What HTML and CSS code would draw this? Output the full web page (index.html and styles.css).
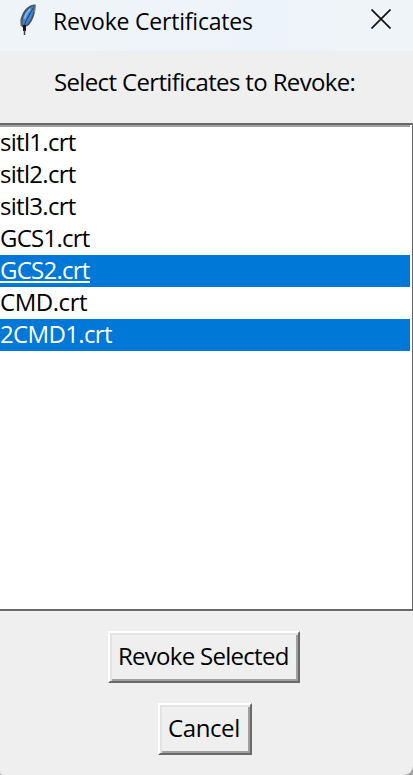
FILE: index.html
```html
<!DOCTYPE html>
<html lang="en">
<head>
<meta charset="utf-8">
<title>Revoke Certificates</title>
<link rel="stylesheet" href="styles.css">
</head>
<body>
<div class="window">
  <header class="titlebar">
    <svg class="feather" viewBox="0 0 20 34" width="20" height="34" aria-hidden="true">
      <path d="M17 1.500C11.500 1.500 6.500 6 4 12C2 16 2 20 3.500 23.500L5.500 25L11 22C14.500 18 17.500 11 17.800 2Z" fill="#45525f"/>
      <path d="M15.500 3C10.500 4.500 6.500 9.500 5 15L4.500 21.500L8 22C12 19 14.500 13 15.500 8Z" fill="#4384cf"/>
      <path d="M12.500 6C9.500 8.500 7.500 12 6.500 16" fill="none" stroke="#7ab2ec" stroke-width="2"/>
      <path d="M15.500 4.500C12.500 10 9 15 6 23" fill="none" stroke="#22405f" stroke-width="1"/>
      <path d="M6.500 22V28" fill="none" stroke="#181818" stroke-width="3"/>
      <path d="M6.500 27V32" fill="none" stroke="#444" stroke-width="1.500"/>
      <path d="M17.500 1.500L16.500 9M2.800 16V23" fill="none" stroke="#999" stroke-width="1"/>
    </svg>
    <h1 class="title">Revoke Certificates</h1>
    <svg class="close" viewBox="0 0 20 20" width="20" height="20" role="img" aria-label="Close">
      <path d="M.5 .5L19.500 19.500M19.500 .5L.5 19.500" fill="none" stroke="#111" stroke-width="1.700"/>
    </svg>
  </header>
  <p class="prompt">Select Certificates to Revoke:</p>
  <div class="listbox">
    <ul class="list">
      <li class="item sitl"><span>sitl1.crt</span></li>
      <li class="item sitl"><span>sitl2.crt</span></li>
      <li class="item sitl"><span>sitl3.crt</span></li>
      <li class="item gcs"><span>GCS1.crt</span></li>
      <li class="item gcs selected active"><span>GCS2.crt</span></li>
      <li class="item cmd"><span>CMD.crt</span></li>
      <li class="item cmd-one selected"><span>2CMD1.crt</span></li>
    </ul>
  </div>
  <div class="actions">
    <button class="button revoke"><span>Revoke Selected</span></button>
    <button class="button cancel"><span>Cancel</span></button>
  </div>
</div>
</body>
</html>
```
FILE: styles.css
```css
* { box-sizing: border-box; }
body {
  margin: 0;
  background: #a5a5a5;
  font-family: "Open Sans", "Noto Sans", sans-serif;
  font-size: 24px;
  line-height: 32px;
  color: #000;
}
.window {
  display: flex;
  flex-direction: column;
  height: 775px;
  overflow: hidden;
  background: #efefef;
  border-radius: 0 0 9px 3px;
}
.titlebar {
  display: flex;
  align-items: flex-start;
  height: 51px;
  padding: 3px 22px 0 18px;
  background: linear-gradient(100deg, #eff4f8 20%, #edf3fb 65%, #eff4f8 85%);
}
.feather { flex: none; }
.title {
  flex: 1;
  margin: 2px 0 0 15px;
  font-size: 23px;
  font-weight: 400;
  letter-spacing: -0.2px;
  white-space: nowrap;
}
.close { flex: none; margin-top: 6px; }
.prompt {
  height: 72px;
  margin: 0;
  padding: 15px 0 0 54px;
  letter-spacing: -0.64px;
  white-space: nowrap;
}
.listbox {
  height: 488px;
  border: solid #696969;
  border-width: 2px 1px 2px 0;
  background: #fff;
}
.list {
  margin: 0 2px 0 0;
  padding: 0;
  border-top: 2px solid #a0a0a0;
  list-style: none;
}
.item { height: 32px; line-height: 30px; white-space: nowrap; }
.item span { display: inline-block; height: 32px; }
.sitl { letter-spacing: -0.7px; }
.gcs { letter-spacing: -0.75px; }
.cmd { letter-spacing: -0.45px; }
.cmd-one { letter-spacing: -0.65px; }
.selected { background: #0078d7; color: #fff; }
.active span {
  background: linear-gradient(#fff, #fff) 0 26px / 90px 2px no-repeat;
}
.actions {
  display: flex;
  flex-direction: column;
  align-items: center;
  gap: 20px;
  padding: 20px 5px 0 0;
}
.button {
  height: 52px;
  padding: 0 0 2px 8px;
  border: 2px solid;
  border-color: #fff #696969 #696969 #fff;
  background: #efefef;
  box-shadow: inset 2px 2px #e3e3e3, inset -2px -2px #a0a0a0;
  color: #000;
  font: inherit;
  text-align: left;
  white-space: nowrap;
}
.revoke { width: 192px; letter-spacing: -0.72px; }
.cancel { width: 94px; margin-left: 2px; letter-spacing: -0.4px; }
```
